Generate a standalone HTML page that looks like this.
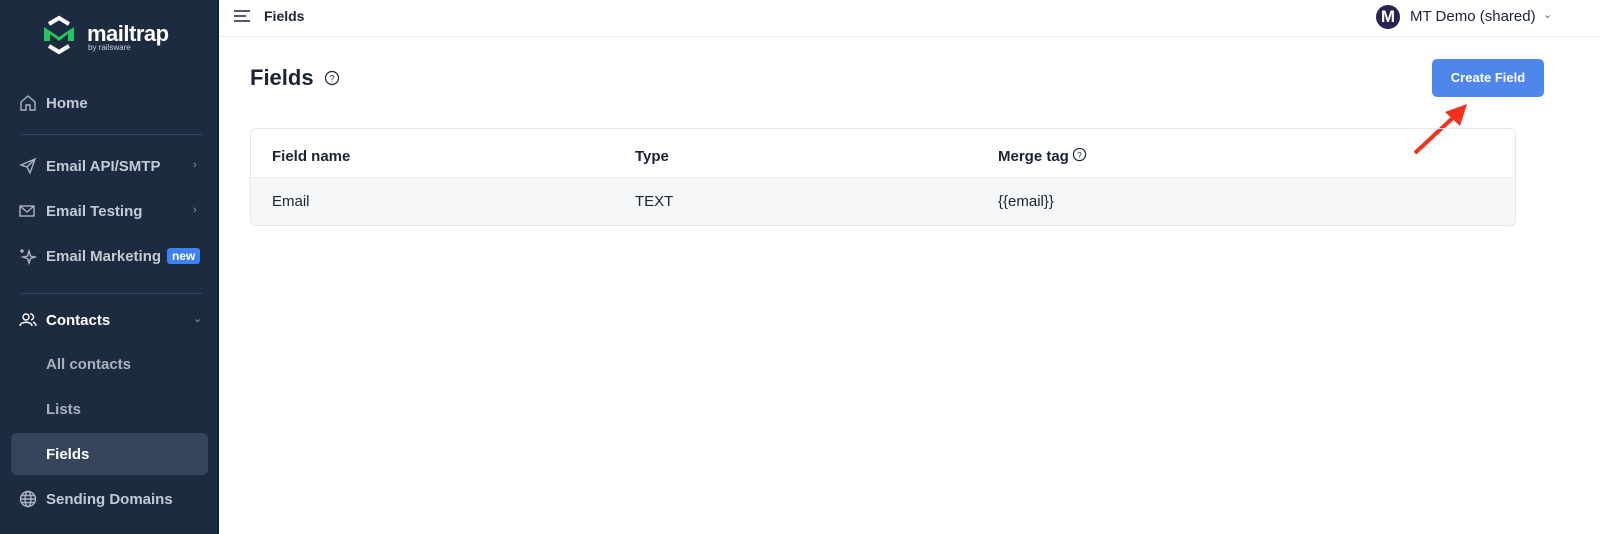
<!DOCTYPE html>
<html><head><meta charset="utf-8"><style>
*{box-sizing:border-box;margin:0;padding:0}
body{width:1600px;height:534px;overflow:hidden;font-family:"Liberation Sans",sans-serif;background:#fff;position:relative}
.sb{position:absolute;left:0;top:0;width:219px;height:534px;background:#1d2b41;border-right:2px solid #15203a}
.it{position:absolute;left:19px;color:#c4cad4;font-size:15px;font-weight:bold;display:flex;align-items:center}
.it svg{margin-right:9px}
.sub{position:absolute;left:46px;color:#aab2bf;font-size:15px;font-weight:bold}
.hr{position:absolute;left:21px;width:181px;height:1px;background:#34425a}
.chev{position:absolute;left:193px;color:#8e98a8;font-size:11px}
.t{position:absolute;color:#1b2335}
</style></head><body>
<div class="sb">
 <svg style="position:absolute;left:41px;top:15px" width="36" height="40" viewBox="0 0 36 40"><path d="M8 9 L18 3 L28 9" stroke="#fff" stroke-width="4" fill="none"/><path d="M3 12 L3 26 L9 26 L9 19 L18 26 L27 19 L27 26 L33 26 L33 12 L18 22 Z" fill="#22c55e"/><path d="M8 31 L18 37 L28 31" stroke="#fff" stroke-width="4" fill="none"/></svg>
 <div style="position:absolute;left:87px;top:21px;color:#fff;font-size:22px;font-weight:bold;letter-spacing:-0.5px">mailtrap</div>
 <div style="position:absolute;left:88px;top:43px;color:#c9ced6;font-size:8px">by railsware</div>
 <div class="it" style="top:94px"><svg width="18" height="18" viewBox="0 0 18 18" fill="none" stroke="#aab2bf" stroke-width="1.4"><path d="M2 8 L9 2 L16 8 V16 H11 V11 H7 V16 H2 Z"/></svg>Home</div>
 <div class="hr" style="top:134px"></div>
 <div class="it" style="top:157px"><svg width="18" height="18" viewBox="0 0 18 18" fill="none" stroke="#aab2bf" stroke-width="1.4"><path d="M2 8 L16 2 L11 16 L8 10 Z M8 10 L16 2"/></svg>Email API/SMTP</div><div class="chev" style="top:159px">›</div>
 <div class="it" style="top:202px"><svg width="18" height="18" viewBox="0 0 18 18" fill="none" stroke="#aab2bf" stroke-width="1.4"><rect x="1" y="4" width="14" height="10"/><path d="M1 4 L8 10 L15 4"/></svg>Email Testing</div><div class="chev" style="top:204px">›</div>
 <div class="it" style="top:247px"><svg width="18" height="18" viewBox="0 0 18 18" fill="none" stroke="#aab2bf" stroke-width="1.4"><path d="M10 4 L11.5 9 L16 10 L11.5 11.5 L10 16 L8.5 11.5 L4 10 L8.5 9 Z M3 2 V6 M1 4 H5"/></svg>Email Marketing<span style="margin-left:6px;background:#3d82f0;color:#fff;font-size:12px;padding:1px 5px;border-radius:3px">new</span></div>
 <div class="hr" style="top:293px"></div>
 <div class="it" style="top:311px;color:#fff"><svg width="18" height="18" viewBox="0 0 18 18" fill="none" stroke="#fff" stroke-width="1.4"><circle cx="7" cy="6" r="3"/><path d="M1 15 C1 10 13 10 13 15 M11 3 A3 3 0 0 1 12 9 M14 11 C16 12 17 13 17 15"/></svg>Contacts</div><div class="chev" style="top:312px">⌄</div>
 <div class="sub" style="top:356px">All contacts</div>
 <div class="sub" style="top:401px">Lists</div>
 <div style="position:absolute;left:11px;top:433px;width:197px;height:42px;background:#37455c;border-radius:6px"></div>
 <div class="sub" style="top:446px;color:#fff">Fields</div>
 <div class="it" style="top:490px"><svg width="18" height="18" viewBox="0 0 18 18" fill="none" stroke="#aab2bf" stroke-width="1.4"><circle cx="9" cy="9" r="7.5"/><ellipse cx="9" cy="9" rx="3" ry="7.5"/><path d="M1.5 9 H16.5 M2.5 5.5 H15.5 M2.5 12.5 H15.5"/></svg>Sending Domains</div>
</div>
<div style="position:absolute;left:219px;top:36px;width:1381px;height:1px;background:#eceef1"></div>
<svg style="position:absolute;left:233px;top:9px" width="18" height="14" viewBox="0 0 18 14" stroke="#1b2335" stroke-width="1.6"><path d="M1 2H17M1 7H13M1 12H17"/></svg>
<div class="t" style="left:264px;top:8px;font-size:14px;font-weight:bold">Fields</div>
<div style="position:absolute;left:1376px;top:5px;width:24px;height:24px;border-radius:50%;background:#2b2450;color:#fff;font-weight:bold;font-size:17px;text-align:center;line-height:24px">M</div>
<div class="t" style="left:1410px;top:8px;font-size:15px">MT Demo (shared)</div>
<div style="position:absolute;left:1543px;top:8px;color:#666;font-size:11px">⌄</div>
<div class="t" style="left:250px;top:65px;font-size:22px;font-weight:bold">Fields</div>
<svg style="position:absolute;left:324px;top:70px" width="16" height="16" viewBox="0 0 16 16"><circle cx="8" cy="8" r="6.5" fill="none" stroke="#1b2335" stroke-width="1.2"/><text x="8" y="11.5" font-size="9" text-anchor="middle" fill="#1b2335" font-family="Liberation Sans">?</text></svg>
<div style="position:absolute;left:1432px;top:59px;width:112px;height:38px;background:#4f86ec;border-radius:5px;color:#fff;font-size:13px;font-weight:bold;text-align:center;line-height:38px">Create Field</div>
<svg style="position:absolute;left:1405px;top:96px" width="75" height="65"><path d="M10 57 L52 18" stroke="#f3321e" stroke-width="4"/><path d="M62 8 L40 16 L55 30 Z" fill="#f3321e"/></svg>
<div style="position:absolute;left:250px;top:128px;width:1266px;height:98px;border:1px solid #e3e6ea;border-radius:6px;overflow:hidden">
 <div style="position:absolute;left:0;top:48px;width:100%;height:50px;background:#f6f7f8;border-top:1px solid #e8ebee"></div>
</div>
<div class="t" style="left:272px;top:148px;font-size:15px;font-weight:bold">Field name</div>
<div class="t" style="left:635px;top:148px;font-size:15px;font-weight:bold">Type</div>
<div class="t" style="left:998px;top:148px;font-size:15px;font-weight:bold">Merge tag</div>
<svg style="position:absolute;left:1072px;top:147px" width="15" height="15" viewBox="0 0 16 16"><circle cx="8" cy="8" r="6.5" fill="none" stroke="#1b2335" stroke-width="1.2"/><text x="8" y="11.5" font-size="9" text-anchor="middle" fill="#1b2335" font-family="Liberation Sans">?</text></svg>
<div class="t" style="left:272px;top:193px;font-size:15px">Email</div>
<div class="t" style="left:635px;top:193px;font-size:15px">TEXT</div>
<div class="t" style="left:998px;top:193px;font-size:15px">{{email}}</div>
</body></html>
